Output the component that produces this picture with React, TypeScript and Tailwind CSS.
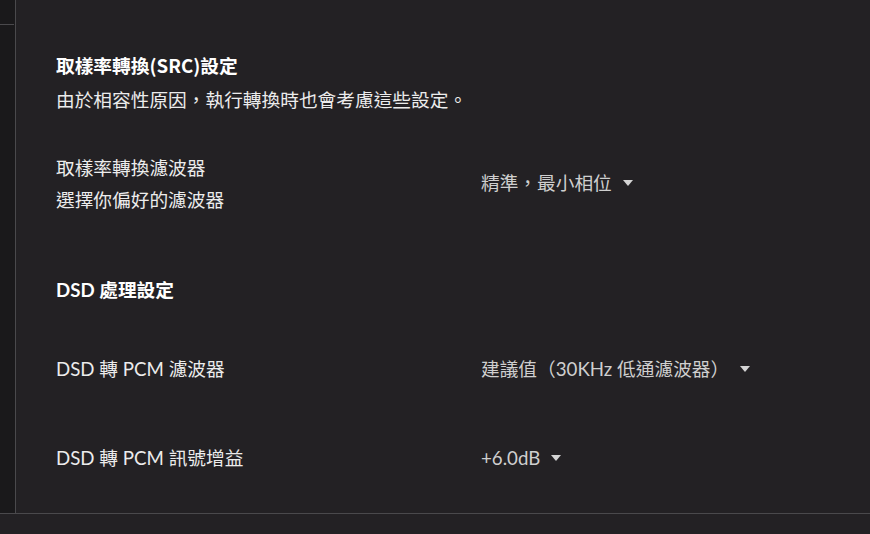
const font = {
  fontFamily: '"Lato", "Noto Sans CJK TC", sans-serif',
};

function Caret() {
  return (
    <svg width="10" height="6" viewBox="0 0 10 6" className="shrink-0">
      <path d="M0 0 L10 0 L5 6 Z" fill="#d4d4d4" />
    </svg>
  );
}

function Dropdown({ value }: { value: string }) {
  return (
    <div className="flex items-center gap-[11px] text-[#cfcfcf]">
      <span>{value}</span>
      <Caret />
    </div>
  );
}

export default function App() {
  return (
    <div
      className="w-[870px] h-[534px] bg-[#232124] flex flex-col overflow-hidden text-[18.7px] leading-[32px]"
      style={font}
    >
      <div className="flex h-[513px]">
        {/* sidebar stub */}
        <div className="w-[16px] bg-[#1a191b] border-r border-[#4a494c] pt-[24px]">
          <div className="h-px w-[14px] bg-[#4a494c]" />
        </div>

        <div className="flex-1 pl-[40px] pt-[49px]">
          <div className="font-bold text-white font-['Noto_Sans_CJK_TC',sans-serif]">取樣率轉換(SRC)設定</div>
          <div className="text-[#ececec] mt-[3px]">由於相容性原因，執行轉換時也會考慮這些設定。</div>

          <div className="flex items-center mt-[36px]">
            <div className="w-[425px] text-[#ececec]">
              <div>取樣率轉換濾波器</div>
              <div>選擇你偏好的濾波器</div>
            </div>
            <div className="-mt-[3px]">
              <Dropdown value="精準，最小相位" />
            </div>
          </div>

          <div className="font-bold text-white mt-[58px]">DSD 處理設定</div>

          <div className="flex items-center mt-[47px]">
            <div className="w-[425px] text-[#ececec]">DSD 轉 PCM 濾波器</div>
            <Dropdown value="建議值（30KHz 低通濾波器）" />
          </div>

          <div className="flex items-center mt-[57px]">
            <div className="w-[425px] text-[#ececec]">DSD 轉 PCM 訊號增益</div>
            <Dropdown value="+6.0dB" />
          </div>
        </div>
      </div>
      <div className="h-px bg-[#4a494c]" />
      <div className="flex-1 bg-[#232124]" />
    </div>
  );
}
